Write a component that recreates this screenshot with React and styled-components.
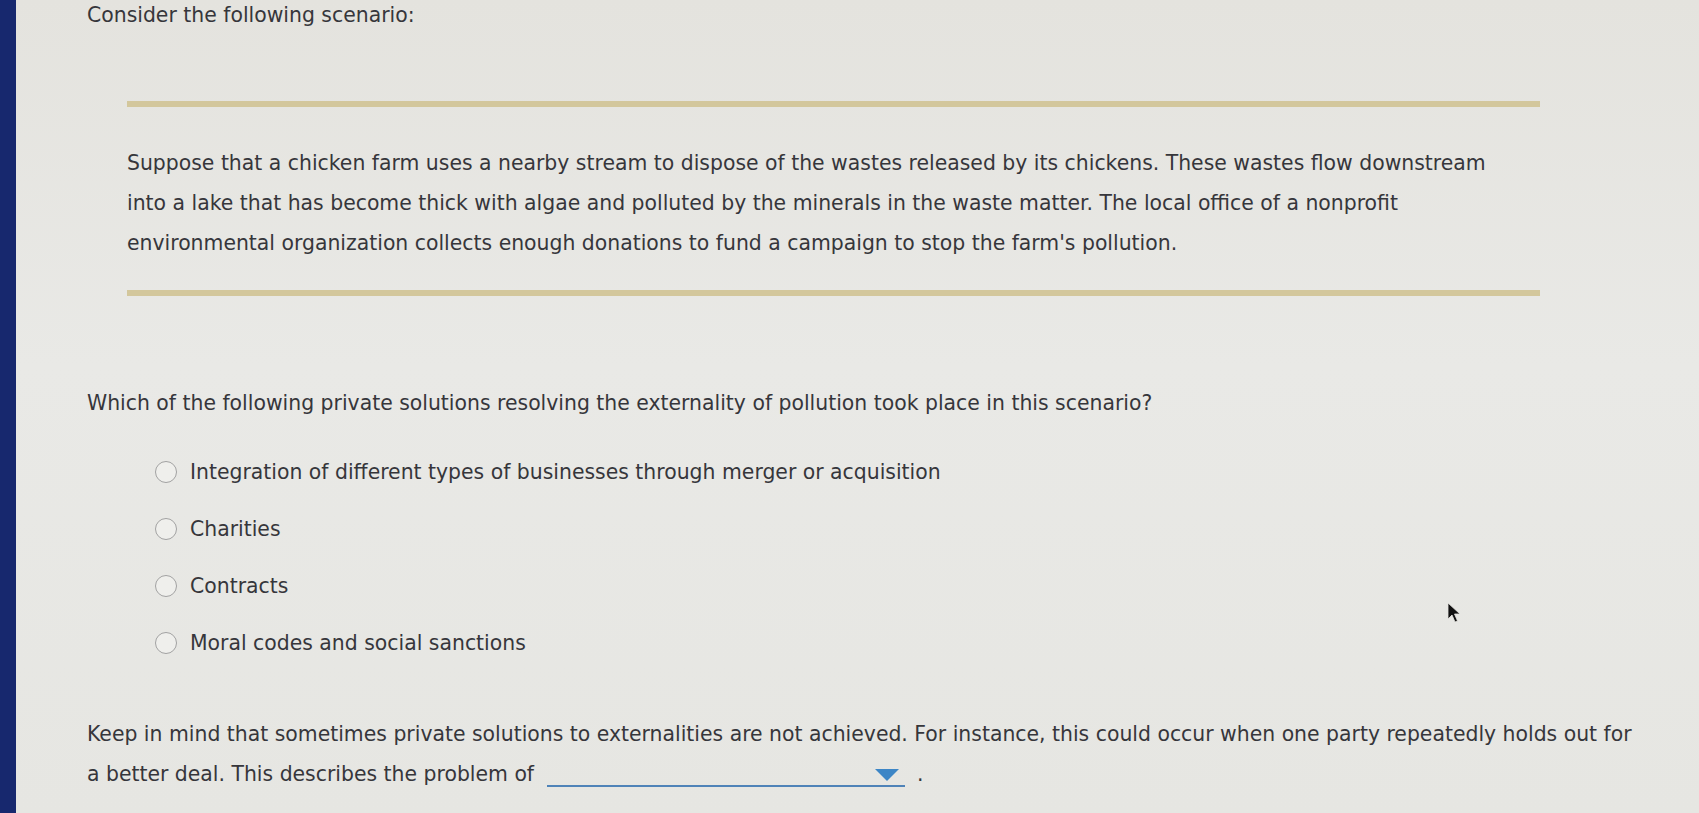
import React from 'react';
import { styled, createGlobalStyle } from 'styled-components';

const options = [
  'Integration of different types of businesses through merger or acquisition',
  'Charities',
  'Contracts',
  'Moral codes and social sanctions',
];

const App = () => {
  return (
    <>
      <GlobalStyle />
      <Page>
        <SideBar />
        <Main>
          <Heading>Consider the following scenario:</Heading>

          {/* scenario box */}
          <Scenario>
            <Rule />
            <ScenarioText>
              Suppose that a chicken farm uses a nearby stream to dispose of the wastes released by its chickens. These wastes flow downstream
              <br />
              into a lake that has become thick with algae and polluted by the minerals in the waste matter. The local office of a nonprofit
              <br />
              environmental organization collects enough donations to fund a campaign to stop the farm's pollution.
            </ScenarioText>
            <Rule $bottom />
          </Scenario>

          <Question>
            Which of the following private solutions resolving the externality of pollution took place in this scenario?
          </Question>

          <Options>
            {options.map((o) => (
              <Option key={o}>
                <Radio type='radio' name='solution' />
                {o}
              </Option>
            ))}
          </Options>

          {/* fill in the blank */}
          <Closing>
            Keep in mind that sometimes private solutions to externalities are not achieved. For instance, this could occur when one party repeatedly holds out for
            <br />
            a better deal. This describes the problem of
            <Select>
              <Arrow />
            </Select>
            <Dot>.</Dot>
          </Closing>
        </Main>

        <Cursor viewBox='0 0 14 22'>
          <path d='M1 1 L1 17 L5 13 L8 20 L10.5 19 L7.5 12 L13 12 Z' fill='#111' stroke='#e6e5e1' strokeWidth='0.8' />
        </Cursor>
      </Page>
    </>
  );
};

export default App;

const GlobalStyle = createGlobalStyle`
  body {
    margin: 0;
    background: #e6e5e1;
    font-family: "DejaVu Sans", Verdana, sans-serif;
    color: #36363b;
  }
`;

const Page = styled.div`
  position: relative;
  display: flex;
  width: 1699px;
  height: 813px;
  overflow: hidden;
  background: linear-gradient(180deg, #e4e3de 0%, #e9e9e6 45%, #e6e6e2 100%);
`;

const SideBar = styled.div`
  width: 16px;
  flex-shrink: 0;
  background: #17286e;
`;

const Main = styled.div`
  flex: 1;
  padding-left: 71px;
  font-size: 20.4px;
`;

const Heading = styled.div`
  line-height: 30px;
`;

const Scenario = styled.div`
  margin-left: 40px;
  width: 1413px;
  padding-top: 71px;
`;

const Rule = styled.div`
  height: 6px;
  background: #d3c79c;
  margin-top: ${(p) => (p.$bottom ? '27px' : '0')};
`;

const ScenarioText = styled.p`
  margin: 36px 0 0;
  line-height: 40px;
  white-space: nowrap;
`;

const Question = styled.div`
  margin-top: 92px;
  line-height: 30px;
`;

const Options = styled.div`
  margin-top: 39px;
  padding-left: 68px;
  display: flex;
  flex-direction: column;
  gap: 27px;
`;

const Option = styled.label`
  display: flex;
  align-items: center;
  gap: 13px;
  line-height: 30px;
`;

const Radio = styled.input`
  appearance: none;
  margin: 0;
  width: 22px;
  height: 22px;
  border-radius: 50%;
  border: 1.5px solid #a2a2a2;
  background: #efefec;
`;

const Closing = styled.p`
  margin: 56px 0 0;
  line-height: 40px;
  white-space: nowrap;
`;

const Select = styled.span`
  display: inline-flex;
  justify-content: flex-end;
  align-items: center;
  vertical-align: 0px;
  width: 358px;
  height: 22px;
  margin-left: 13px;
  padding-right: 6px;
  box-sizing: border-box;
  border-bottom: 2px solid #4f83b8;
`;

const Arrow = styled.span`
  width: 0;
  height: 0;
  border-left: 12px solid transparent;
  border-right: 12px solid transparent;
  border-top: 12px solid #3d86c6;
`;

const Dot = styled.span`
  margin-left: 12px;
`;

const Cursor = styled.svg`
  position: absolute;
  left: 1447px;
  top: 602px;
  width: 14px;
  height: 22px;
`;
